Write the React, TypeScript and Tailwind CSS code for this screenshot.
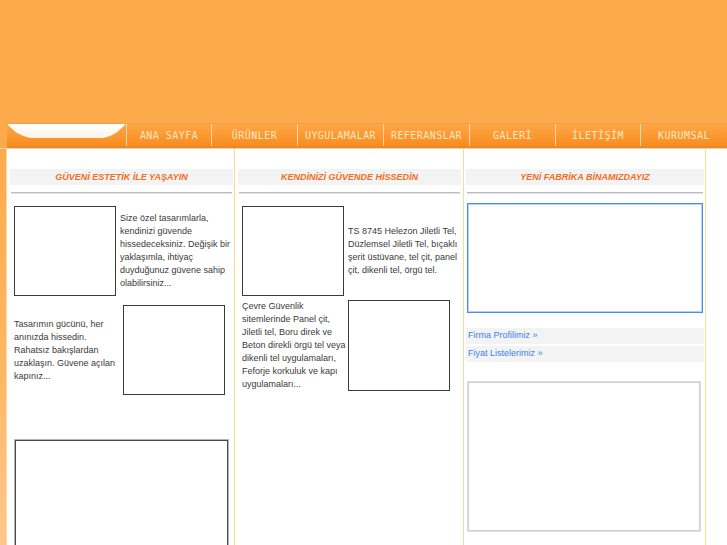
import React from "react";

const navItems: { label: string; w: string }[] = [
  { label: "ANA SAYFA", w: "w-[85px]" },
  { label: "ÜRÜNLER", w: "w-[86px]" },
  { label: "UYGULAMALAR", w: "w-[86px]" },
  { label: "REFERANSLAR", w: "w-[86px]" },
  { label: "GALERİ", w: "w-[86px]" },
  { label: "İLETİŞİM", w: "w-[85px]" },
  { label: "KURUMSAL", w: "w-[87px]" },
];

function Header({ title }: { title: string }) {
  return (
    <>
      <div className="h-[16px] bg-[#f3f3f3] flex items-center justify-center text-[9px] font-bold italic text-[#f36d22] leading-none whitespace-nowrap">
        {title}
      </div>
      <div className="mt-[7px] mx-[1px] h-[2px] bg-[#bdbdbd] border-b border-[#e2e2e2]" />
    </>
  );
}

function Box({ cls }: { cls: string }) {
  return <div className={`shrink-0 border border-[#3a3a3a] bg-white ${cls}`} />;
}

function Lines({ lines, cls = "" }: { lines: string[]; cls?: string }) {
  return (
    <div className={`text-[9px] leading-[13px] text-[#3a3a3a] whitespace-nowrap ${cls}`}>
      {lines.map((l, i) => (
        <div key={i}>{l}</div>
      ))}
    </div>
  );
}

export default function App() {
  return (
    <div
      className="w-[727px] h-[545px] overflow-hidden bg-white flex flex-col"
      style={{ fontFamily: '"Liberation Sans", Arial, sans-serif' }}
    >
      {/* top orange banner */}
      <div className="h-[123px] bg-[#fcaa4b] shrink-0" />
      {/* nav */}
      <div className="h-[25px] shrink-0 flex bg-[#fcaa4b]">
        <div className="w-[7px] shrink-0" />
        <div className="flex-1 flex border-t border-[#f4a04a] border-b-2 border-b-[#e98a2a] bg-gradient-to-b from-[#fda646] via-[#fb9a32] to-[#f88c1f]">
          <div className="w-[119px] shrink-0 relative">
            <svg width="119" height="22" viewBox="0 0 119 22" className="absolute left-0 top-0">
              <defs>
                <linearGradient id="wg" x1="0" y1="0" x2="0" y2="1">
                  <stop offset="0" stopColor="#ffffff" />
                  <stop offset="1" stopColor="#fdf3e6" />
                </linearGradient>
              </defs>
              <path
                d="M1 0 L118 0 L118 1 C112 6 108 12 96 14 L24 14 C12 12 6 6 1 1 Z"
                fill="url(#wg)"
              />
            </svg>
          </div>
          {navItems.map((n) => (
            <div
              key={n.label}
              className={`${n.w} shrink-0 border-l border-[#fdd6a2] flex items-center justify-center text-[10px] tracking-[0.45px] text-[#fde6c4] whitespace-nowrap`}
              style={{ fontFamily: '"DejaVu Sans Mono", monospace' }}
            >
              {n.label}
            </div>
          ))}
        </div>
      </div>

      {/* content */}
      <div className="flex-1 flex border-t border-[#f3d2a8]">
        <div className="w-[6px] shrink-0 bg-gradient-to-b from-[#fcab4c] via-[#fdb660] to-[#fec98e]" />
        {/* column 1 */}
        <div className="w-[229px] shrink-0 border-l border-[#fed9a0] border-r border-r-[#ffd993] pl-[3px] pr-[1px] pt-[20px]">
          <Header title="GÜVENİ ESTETİK İLE YAŞAYIN" />
          <div className="mt-[12px] pl-[4px] flex items-center">
            <Box cls="w-[102px] h-[90px]" />
            <Lines
              cls="ml-[4px]"
              lines={[
                "Size özel tasarımlarla,",
                "kendinizi güvende",
                "hissedeceksiniz. Değişik bir",
                "yaklaşımla, ihtiyaç",
                "duyduğunuz güvene sahip",
                "olabilirsiniz...",
              ]}
            />
          </div>
          <div className="mt-[9px] pl-[4px] flex items-center">
            <Lines
              cls="w-[109px]"
              lines={[
                "Tasarımın gücünü, her",
                "anınızda hissedin.",
                "Rahatsız bakışlardan",
                "uzaklaşın. Güvene açılan",
                "kapınız...",
              ]}
            />
            <Box cls="w-[102px] h-[90px]" />
          </div>
          <div className="mt-[44px] ml-[4px] w-[215px] h-[120px] border border-[#b5b5b5]">
            <div className="w-full h-full border border-[#4a4a4a]" />
          </div>
        </div>
        {/* column 2 */}
        <div className="w-[229px] shrink-0 border-r border-[#ffd993] pl-[3px] pr-[2px] pt-[20px]">
          <Header title="KENDİNİZİ GÜVENDE HİSSEDİN" />
          <div className="mt-[12px] pl-[4px] flex items-center">
            <Box cls="w-[102px] h-[90px]" />
            <Lines
              cls="ml-[4px]"
              lines={[
                "TS 8745 Helezon Jiletli Tel,",
                "Düzlemsel Jiletli Tel, bıçaklı",
                "şerit üstüvane, tel çit, panel",
                "çit, dikenli tel, örgü tel.",
              ]}
            />
          </div>
          <div className="mt-[4px] pl-[4px] flex items-center">
            <Lines
              cls="w-[106px]"
              lines={[
                "Çevre Güvenlik",
                "sitemlerinde Panel çit,",
                "Jiletli tel, Boru direk ve",
                "Beton direkli örgü tel veya",
                "dikenli tel uygulamaları,",
                "Feforje korkuluk ve kapı",
                "uygulamaları...",
              ]}
            />
            <Box cls="w-[102px] h-[91px]" />
          </div>
        </div>
        {/* column 3 */}
        <div className="w-[242px] shrink-0 border-r border-[#ffd993] pl-[2px] pr-[1px] pt-[20px]">
          <Header title="YENİ FABRİKA BİNAMIZDAYIZ" />
          <div className="mt-[9px] ml-[1px] w-[236px] h-[110px] border border-[#4a8cf2]">
            <div className="w-full h-full border border-[#b4cffa]" />
          </div>
          <div className="mt-[15px] h-[16px] bg-[#f3f3f3] flex items-center pl-[2px] text-[9px] text-[#3a82f0]">
            Firma Profilimiz »
          </div>
          <div className="mt-[2px] h-[16px] bg-[#f3f3f3] flex items-center pl-[2px] text-[9px] text-[#3a82f0]">
            Fiyat Listelerimiz »
          </div>
          <div className="mt-[19px] ml-[1px] w-[234px] h-[151px] border border-[#e0e0e0]">
            <div className="w-full h-full border border-[#cfcfcf]" />
          </div>
        </div>
        <div className="flex-1" />
      </div>
    </div>
  );
}
